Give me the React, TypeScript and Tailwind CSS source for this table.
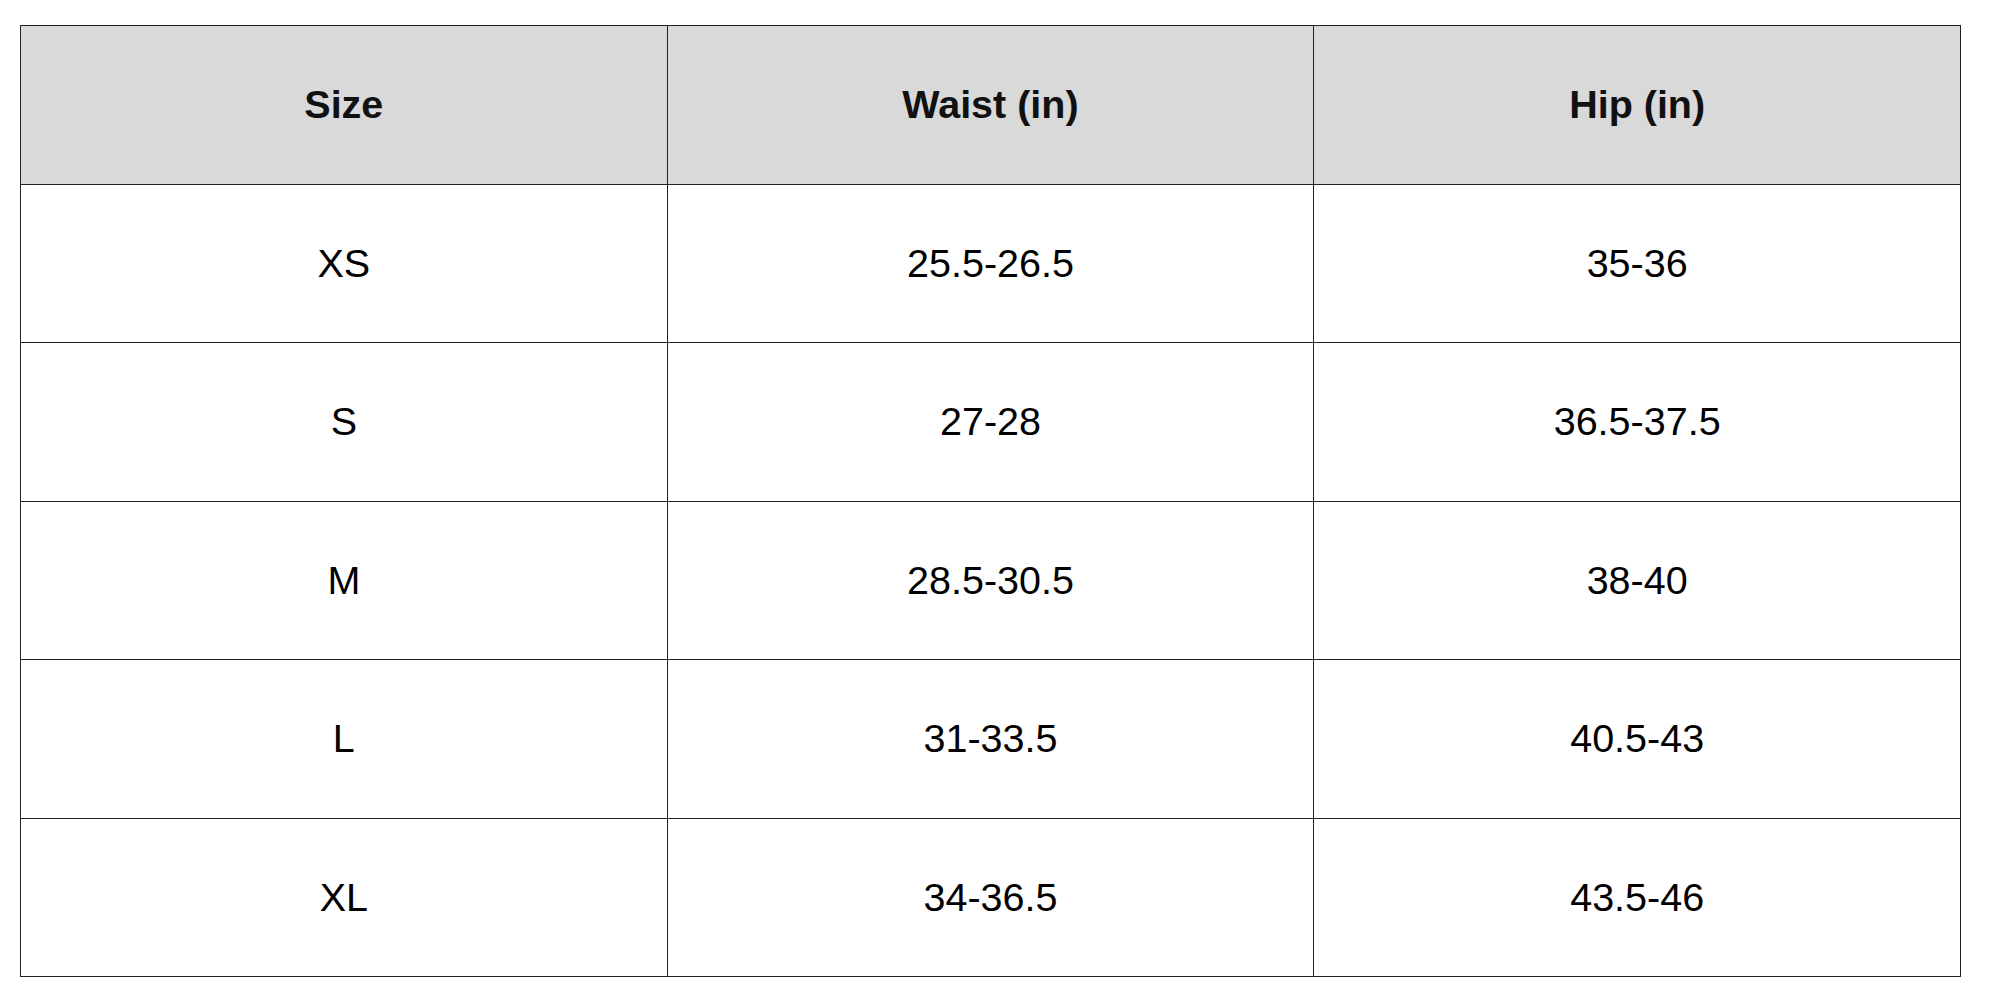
import React from 'react';

const rows: [string, string, string][] = [
  ['XS', '25.5-26.5', '35-36'],
  ['S', '27-28', '36.5-37.5'],
  ['M', '28.5-30.5', '38-40'],
  ['L', '31-33.5', '40.5-43'],
  ['XL', '34-36.5', '43.5-46'],
];

const headers = ['Size', 'Waist (in)', 'Hip (in)'];

const App: React.FC = () => {
  return (
    <div className="bg-white w-[2000px] h-[1000px] pt-[25px] pl-[20px]" style={{ fontFamily: '"Liberation Sans", Arial, sans-serif' }}>
      <table className="w-[1941px] border-collapse table-fixed border border-[#666]">
        <thead>
          <tr className="h-[158.5px] bg-[#d9d9d9]">
            {headers.map((h) => (
              <th key={h} className="border border-[#222] text-center align-middle text-[39.5px] font-bold text-[#111]">
                {h}
              </th>
            ))}
          </tr>
        </thead>
        <tbody>
          {rows.map((r) => (
            <tr key={r[0]} className="h-[158.5px]">
              {r.map((c, i) => (
                <td key={i} className="border border-[#222] text-center align-middle text-[39.5px] text-black">
                  {c}
                </td>
              ))}
            </tr>
          ))}
        </tbody>
      </table>
    </div>
  );
};

export default App;
